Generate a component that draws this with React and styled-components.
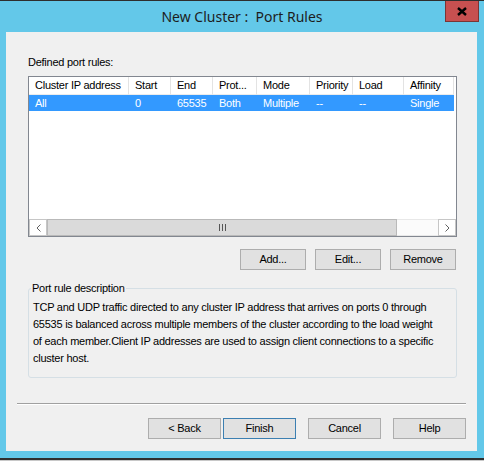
import React from "react";
import styled, { createGlobalStyle } from "styled-components";

const GlobalStyle = createGlobalStyle`
  html, body {
    margin: 0;
    padding: 0;
    background: #f0f0f0;
  }
  body {
    font-family: "Liberation Sans", Arial, sans-serif;
    font-size: 11px;
    letter-spacing: -0.25px;
    color: #000;
  }
`;

const Window = styled.div`
  width: 484px;
  height: 461px;
  box-sizing: border-box;
  border-top: 1px solid #2e2e2e;
  background: #63c8e9;
  display: flex;
  flex-direction: column;
`;

const TitleBar = styled.div`
  height: 31px;
  flex: 0 0 auto;
  display: grid;
  grid-template-columns: 1fr auto 1fr;
`;

const Title = styled.div`
  grid-column: 2;
  align-self: center;
  font-family: "Noto Sans", "Open Sans", sans-serif;
  font-size: 14px;
  letter-spacing: 0;
  color: #1d1d1d;
  white-space: pre;
`;

const CloseButton = styled.div`
  grid-column: 3;
  justify-self: end;
  align-self: start;
  width: 34px;
  height: 21px;
  margin-right: 5px;
  box-sizing: border-box;
  background: #c75050;
  border: 1px solid #7a3535;
  border-top: none;
  display: flex;
  align-items: center;
  justify-content: center;
`;

const Client = styled.div`
  height: 419px;
  flex: 0 0 auto;
  margin: 0 7px 0 6px;
  background: #f0f0f0;
  display: flex;
  flex-direction: column;
`;

const FrameBottom = styled.div`
  flex: 1 1 auto;
`;

const BottomEdge = styled.div`
  height: 3px;
  flex: 0 0 auto;
  box-sizing: border-box;
  border-top: 2px solid #2f2f2f;
  background: #c8c8c8;
`;

const Body = styled.div`
  padding: 23px 20px 0 22px;
  display: flex;
  flex-direction: column;
`;

const Label = styled.div`
  line-height: 14px;
  margin-bottom: 7px;
`;

const ListBox = styled.div`
  height: 161px;
  box-sizing: border-box;
  border: 1px solid #828790;
  background: #fff;
  display: flex;
  flex-direction: column;
`;

const ListArea = styled.div`
  flex: 1 1 auto;
`;

const HeaderRow = styled.div`
  display: flex;
  height: 18px;
`;

const HeaderCell = styled.div`
  width: ${p => p.$w}px;
  box-sizing: border-box;
  padding-left: 6px;
  line-height: 17px;
  border-right: 1px solid #e3e3e3;
  border-bottom: 1px solid #ececec;
  white-space: nowrap;
  overflow: hidden;
`;

const Row = styled.div`
  display: flex;
  height: 16px;
  width: max-content;
  background: ${p => (p.$selected ? "#3399ff" : "transparent")};
  color: ${p => (p.$selected ? "#fff" : "#000")};
`;

const Cell = styled.div`
  width: ${p => p.$w}px;
  box-sizing: border-box;
  padding-left: 6px;
  line-height: 16px;
  white-space: nowrap;
`;

const ScrollBar = styled.div`
  height: 17px;
  flex: 0 0 auto;
  display: flex;
  background: #fbfbfb;
`;

const ArrowButton = styled.div`
  width: 18px;
  box-sizing: border-box;
  border: 1px solid #c6c6c6;
  background: #fff;
  display: flex;
  align-items: center;
  justify-content: center;
`;

const Thumb = styled.div`
  width: 350px;
  box-sizing: border-box;
  border: 1px solid #b9b9b9;
  background: #dadada;
  display: flex;
  align-items: center;
  justify-content: center;
`;

const Track = styled.div`
  flex: 1 1 auto;
  border-top: 1px solid #e8e8e8;
  border-bottom: 1px solid #e8e8e8;
`;

const ButtonRow = styled.div`
  display: flex;
  justify-content: flex-end;
  gap: ${p => p.$gap}px;
  margin: ${p => p.$margin};
`;

const Button = styled.div`
  width: ${p => p.$w}px;
  height: 21px;
  box-sizing: border-box;
  border: 1px solid ${p => (p.$default ? "#3c7fb1" : "#adadad")};
  background: #e1e1e1;
  display: flex;
  align-items: center;
  justify-content: center;
  line-height: 1;
`;

const GroupBox = styled.fieldset`
  margin: 11px 0 0 0;
  padding: 0 0 0 2px;
  height: 97px;
  box-sizing: border-box;
  border: 1px solid #d5dfe5;
  border-radius: 3px;
`;

const Legend = styled.legend`
  padding: 0 1px;
  line-height: 14px;
`;

const Description = styled.div`
  margin: 4px 0 0 2px;
  line-height: 17px;
`;

const Separator = styled.div`
  margin: 25px 11px 0 11px;
  border-top: 1px solid #a0a0a0;
  border-bottom: 1px solid #fff;
`;

const Footer = styled.div`
  display: flex;
  justify-content: flex-end;
  gap: 12px;
  padding: 13px 11px 0 0;
`;

const columns = [
  { label: "Cluster IP address", w: 100 },
  { label: "Start", w: 42 },
  { label: "End", w: 42 },
  { label: "Prot...", w: 44 },
  { label: "Mode", w: 53 },
  { label: "Priority", w: 43 },
  { label: "Load", w: 51 },
  { label: "Affinity", w: 50 }
];

const rules = [["All", "0", "65535", "Both", "Multiple", "--", "--", "Single"]];

const CloseGlyph = () => (
  <svg width="10" height="9" viewBox="0 0 10 9">
    <path d="M1 1 L9 8 M9 1 L1 8" stroke="#000" strokeWidth="2.4" fill="none" />
  </svg>
);

const Chevron = ({ dir }) => (
  <svg width="5" height="8" viewBox="0 0 5 8">
    <path
      d={dir === "left" ? "M4.5 0.5 L1 4 L4.5 7.5" : "M0.5 0.5 L4 4 L0.5 7.5"}
      stroke="#606060"
      strokeWidth="1"
      fill="none"
    />
  </svg>
);

const Grip = () => (
  <svg width="7" height="7" viewBox="0 0 7 7">
    <path d="M0.5 0 V7 M3.5 0 V7 M6.5 0 V7" stroke="#555" strokeWidth="1" />
  </svg>
);

export default function App() {
  return (
    <>
      <GlobalStyle />
      <Window>
        <TitleBar>
          <Title>{"New Cluster :  Port Rules"}</Title>
          <CloseButton>
            <CloseGlyph />
          </CloseButton>
        </TitleBar>
        <Client>
          <Body>
            <Label>Defined port rules:</Label>
            <ListBox>
              <ListArea>
                <HeaderRow>
                  {columns.map(c => (
                    <HeaderCell key={c.label} $w={c.w}>
                      {c.label}
                    </HeaderCell>
                  ))}
                </HeaderRow>
                {rules.map((r, i) => (
                  <Row key={i} $selected>
                    {r.map((v, j) => (
                      <Cell key={j} $w={columns[j].w}>
                        {v}
                      </Cell>
                    ))}
                  </Row>
                ))}
              </ListArea>
              <ScrollBar>
                <ArrowButton>
                  <Chevron dir="left" />
                </ArrowButton>
                <Thumb>
                  <Grip />
                </Thumb>
                <Track />
                <ArrowButton>
                  <Chevron dir="right" />
                </ArrowButton>
              </ScrollBar>
            </ListBox>
            <ButtonRow $gap={9} $margin="12px 1px 0 0">
              <Button $w={66}>Add...</Button>
              <Button $w={66}>Edit...</Button>
              <Button $w={66}>Remove</Button>
            </ButtonRow>
            <GroupBox>
              <Legend>Port rule description</Legend>
              <Description>
                TCP and UDP traffic directed to any cluster IP address that arrives on ports 0 through
                <br />
                65535 is balanced across multiple members of the cluster according to the load weight
                <br />
                of each member.Client IP addresses are used to assign client connections to a specific
                <br />
                cluster host.
              </Description>
            </GroupBox>
          </Body>
          <Separator />
          <Footer>
            <ButtonRow $gap={2} $margin="0">
              <Button $w={73}>&lt; Back</Button>
              <Button $w={73} $default>
                Finish
              </Button>
            </ButtonRow>
            <Button $w={73}>Cancel</Button>
            <Button $w={73}>Help</Button>
          </Footer>
        </Client>
        <FrameBottom />
        <BottomEdge />
      </Window>
    </>
  );
}
